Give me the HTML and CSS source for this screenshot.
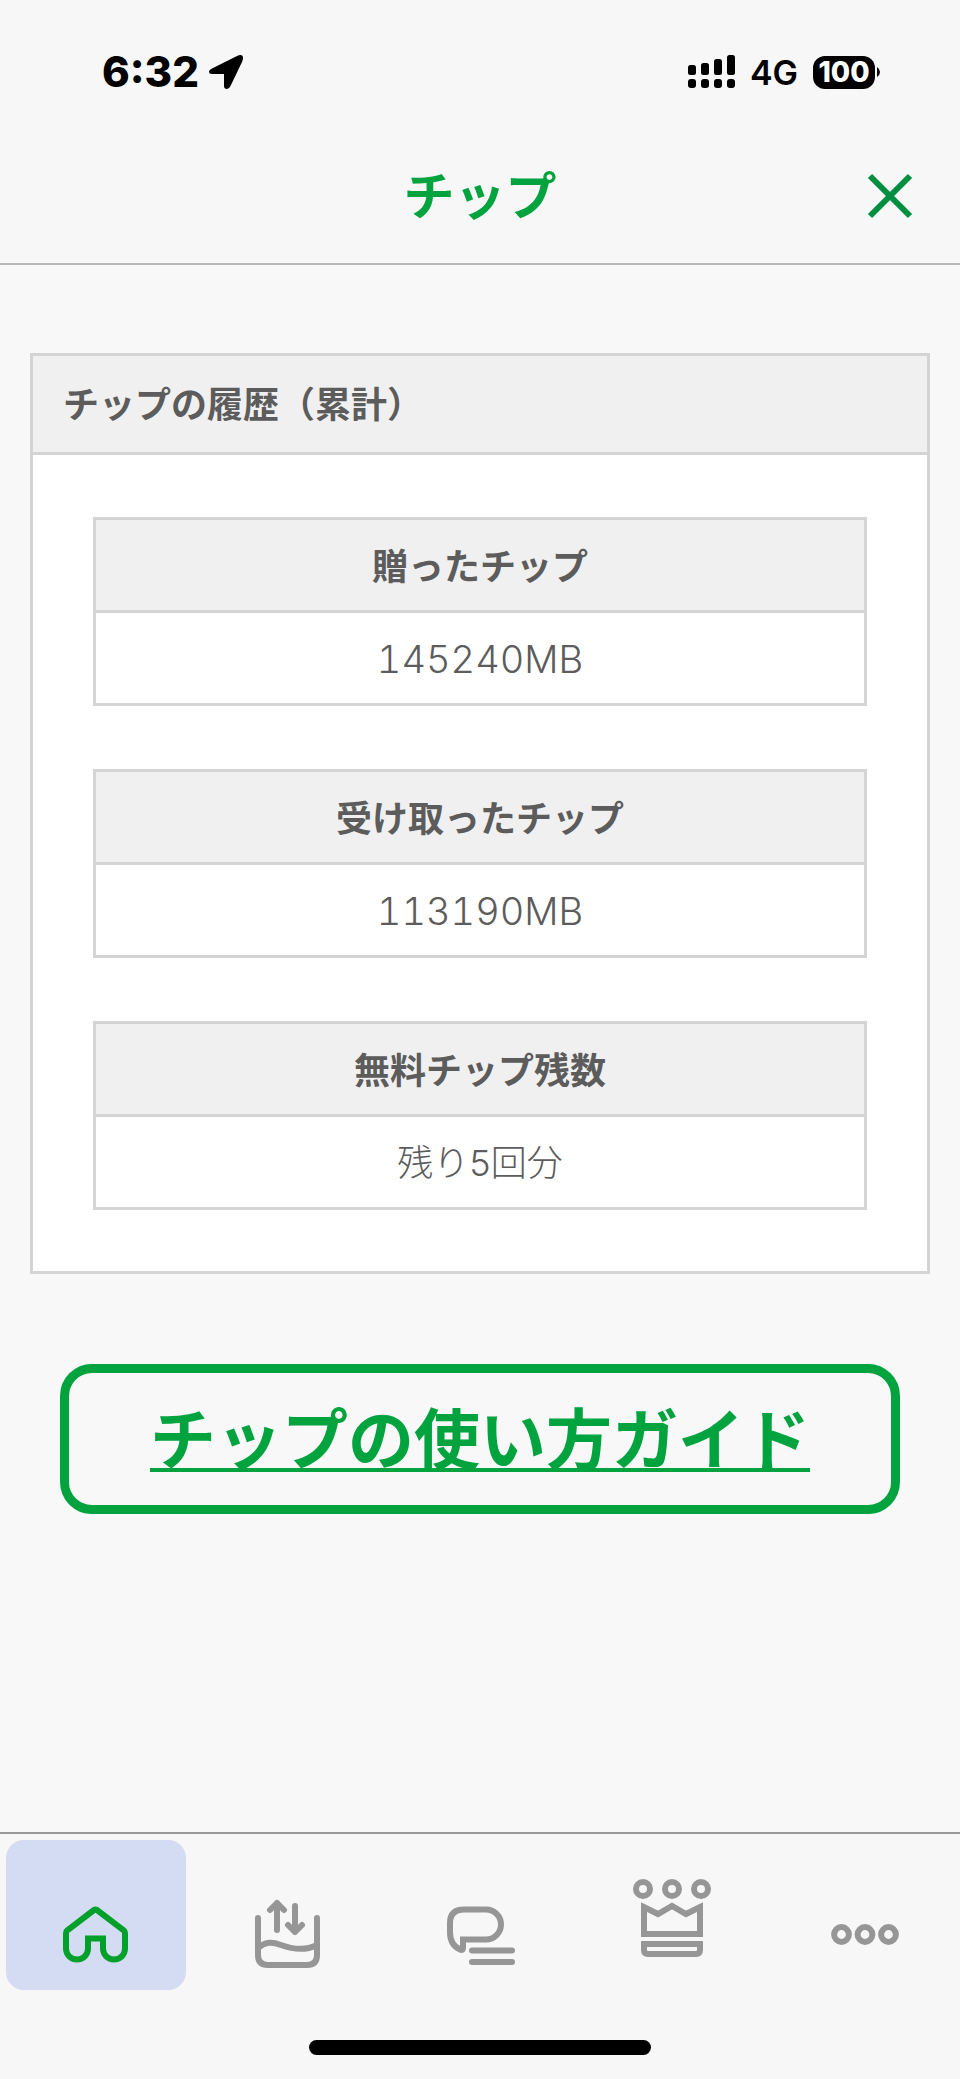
FILE: index.html
```html
<!DOCTYPE html>
<html lang="ja">
<head>
<meta charset="utf-8">
<meta name="viewport" content="width=device-width, initial-scale=1">
<title>チップ</title>
<link rel="stylesheet" href="styles.css">
</head>
<body>
<div class="app">
  <div class="status">
    <div class="status-group">
      <span class="time">6:32</span>
      <svg class="location" viewBox="0 0 34 34" aria-hidden="true"><path d="M3 13.500 28 1Q32-.8 33.500 1 34.800 3 33 7L21.500 31Q20 34 18 34 15 34 15 31V19H3Q0 19 0 16.500 0 15 3 13.500Z"/></svg>
    </div>
    <div class="status-group">
      <svg class="signal" viewBox="0 0 48 34" aria-hidden="true">
        <rect x="0" y="10" width="8" height="10" rx="2.500"/><rect x="13" y="8" width="8" height="12" rx="2.500"/><rect x="26" y="4" width="8" height="16" rx="2.500"/><rect x="39" y="0" width="8" height="20" rx="2.500"/>
        <rect x="0" y="24" width="8" height="9" rx="3"/><rect x="13" y="24" width="8" height="9" rx="3"/><rect x="26" y="24" width="8" height="9" rx="3"/><rect x="39" y="24" width="8" height="9" rx="3"/>
      </svg>
      <span class="network">4G</span>
      <div class="battery-wrap">
        <span class="battery">100</span>
        <svg class="nub" viewBox="0 0 3 10" aria-hidden="true"><path d="M0 0Q3 2 3 5T0 10Z"/></svg>
      </div>
    </div>
  </div>

  <header class="header">
    <h1 class="title">チップ</h1>
    <button class="close" type="button" aria-label="閉じる">
      <svg viewBox="0 0 48 48" aria-hidden="true"><path d="M4 4 44 44M44 4 4 44"/></svg>
    </button>
  </header>

  <main class="content">
    <section class="card">
      <h2 class="card-title">チップの履歴（累計）</h2>
      <div class="card-body">
        <dl class="entry"><dt>贈ったチップ</dt><dd class="amount">145240MB</dd></dl>
        <dl class="entry"><dt>受け取ったチップ</dt><dd class="amount">113190MB</dd></dl>
        <dl class="entry"><dt>無料チップ残数</dt><dd>残り5回分</dd></dl>
      </div>
    </section>
    <a class="guide" href="#">チップの使い方ガイド</a>
  </main>

  <nav class="tabs">
    <a class="tab tab-active" href="#" aria-label="ホーム">
      <svg viewBox="0 0 96 96" aria-hidden="true"><path d="M46 35 19 55.500Q18 56.300 18 58V73.500A11 11 0 0 0 40 73.500V63.500H55V73.500A11 11 0 0 0 77 73.500V58Q77 56.300 76 55.500L49 35Q47.500 34 46 35Z"/></svg>
    </a>
    <a class="tab" href="#" aria-label="データ">
      <svg viewBox="0 0 96 96" aria-hidden="true"><path d="M18 43V80Q18 90 28 90H67Q77 90 77 80V43M18 73C26 66 33 67 41 70S63 77 77 70M37 55V28M30 35 37 28 44 35M55 31V57M48 50 55 57 62 50"/></svg>
    </a>
    <a class="tab" href="#" aria-label="トーク">
      <svg viewBox="0 0 96 96" aria-hidden="true"><path class="miter" d="M31 64.500V73Q31 76 28 74.500Q18 70 18 57V48Q18 34.500 32 34.500H54A15 15 0 0 1 54 64.500Z"/><path d="M40 75.500H80M40 87H80"/></svg>
    </a>
    <a class="tab" href="#" aria-label="ランキング">
      <svg viewBox="0 0 96 96" aria-hidden="true"><circle cx="19" cy="14" r="7"/><circle cx="48" cy="14" r="7"/><circle cx="77" cy="14" r="7"/><path class="miter" d="M20 32V59H76V32L62 39 48 31 34 39Z"/><path class="miter" d="M20 69H76V75Q76 79 72 79H24Q20 79 20 75Z"/></svg>
    </a>
    <a class="tab" href="#" aria-label="その他">
      <svg viewBox="0 0 96 96" aria-hidden="true"><circle cx="25.500" cy="59.500" r="7.400"/><circle cx="49" cy="59.500" r="7.400"/><circle cx="72.500" cy="59.500" r="7.400"/></svg>
    </a>
  </nav>
  <div class="home-area"><div class="home-bar"></div></div>
</div>
</body>
</html>
```
FILE: styles.css
```css
* {
  box-sizing: border-box;
}

body {
  margin: 0;
  background: #f8f8f8;
  color: #5c5c5c;
  font-family: "Noto Sans CJK JP", sans-serif;
}

.app {
  display: flex;
  flex-direction: column;
  min-height: 100vh;
}

.status {
  display: flex;
  justify-content: space-between;
  align-items: center;
  height: 144px;
  padding: 0 80px 0 102px;
  background: #f7f7f7;
  color: #000;
  font-family: Inter, sans-serif;
}

.status-group {
  display: flex;
  align-items: center;
}

.time {
  font-size: 42px;
  font-weight: 800;
  line-height: 50px;
}

.location {
  width: 34px;
  height: 34px;
  margin-left: 10px;
}

.signal {
  width: 48px;
  height: 34px;
}

.network {
  margin: 0 15px 0 14px;
  font-size: 34px;
  font-weight: 600;
}

.battery-wrap {
  display: flex;
  align-items: center;
  gap: 2px;
}

.battery {
  width: 62px;
  border-radius: 12px;
  background: #000;
  color: #fff;
  font-size: 28px;
  font-weight: 800;
  line-height: 33px;
  text-align: center;
}

.nub {
  width: 3px;
  height: 10px;
}

.header {
  display: grid;
  grid-template-columns: 1fr auto 1fr;
  align-items: center;
  height: 121px;
  padding: 0 46px 16px;
  border-bottom: 2px solid #b8b8b8;
  background: #f7f7f7;
}

.title {
  grid-column: 2;
  margin: 0;
  padding-bottom: 6px;
  color: #00a33e;
  font-size: 51px;
  font-weight: 700;
  line-height: 72px;
}

.close {
  justify-self: end;
  width: 48px;
  height: 48px;
  padding: 0;
  border: 0;
  background: none;
}

.close svg {
  display: block;
  fill: none;
  stroke: #008f41;
  stroke-width: 6;
}

.content {
  flex: 1;
  padding: 88px 30px 0;
}

.card {
  border: 3px solid #d4d4d4;
  background: #fff;
}

.card-title {
  margin: 0;
  padding: 20px 30px 24px;
  border-bottom: 3px solid #d4d4d4;
  background: #f0f0f0;
  font-size: 36px;
  font-weight: 700;
  line-height: 52px;
}

.card-body {
  display: flex;
  flex-direction: column;
  gap: 63px;
  padding: 62px 60px 61px;
}

.entry {
  margin: 0;
  border: 3px solid #d4d4d4;
  font-size: 36px;
  line-height: 52px;
  text-align: center;
}

.entry dt {
  padding: 18px 0 20px;
  border-bottom: 3px solid #d4d4d4;
  background: #f0f0f0;
  font-weight: 700;
}

.entry dd {
  margin: 0;
  padding: 20px 0 18px;
  font-family: Inter, "Noto Sans CJK JP", sans-serif;
  font-weight: 300;
}

.entry .amount {
  font-size: 38px;
  font-variant-numeric: tabular-nums;
}

.guide {
  display: block;
  margin: 90px 30px 0;
  padding: 14px 0 22px;
  border: 9px solid #00a33e;
  border-radius: 32px;
  color: #00a33e;
  font-size: 66px;
  font-weight: 700;
  line-height: 96px;
  text-align: center;
  text-decoration: underline;
  text-decoration-thickness: 4px;
  text-decoration-skip-ink: none;
  text-underline-offset: 4px;
}

.tabs {
  display: grid;
  grid-template-columns: repeat(5, 1fr);
  padding-top: 6px;
  border-top: 2px solid #999;
  background: #f7f7f7;
}

.tab {
  display: flex;
  justify-content: center;
  margin: 0 6px;
  padding: 35px 0 19px;
  border-radius: 18px;
}

.tab-active {
  background: #d3dcf3;
}

.tab svg {
  width: 96px;
  height: 96px;
  fill: none;
  stroke: #969696;
  stroke-width: 6;
  stroke-linecap: round;
  stroke-linejoin: round;
}

.tab-active svg {
  stroke: #00a02a;
  stroke-linejoin: miter;
}

.tab .miter {
  stroke-linecap: butt;
  stroke-linejoin: miter;
}

.home-area {
  display: flex;
  justify-content: center;
  padding: 50px 0 24px;
  background: #f7f7f7;
}

.home-bar {
  width: 342px;
  height: 15px;
  border-radius: 8px;
  background: #000;
}
```
